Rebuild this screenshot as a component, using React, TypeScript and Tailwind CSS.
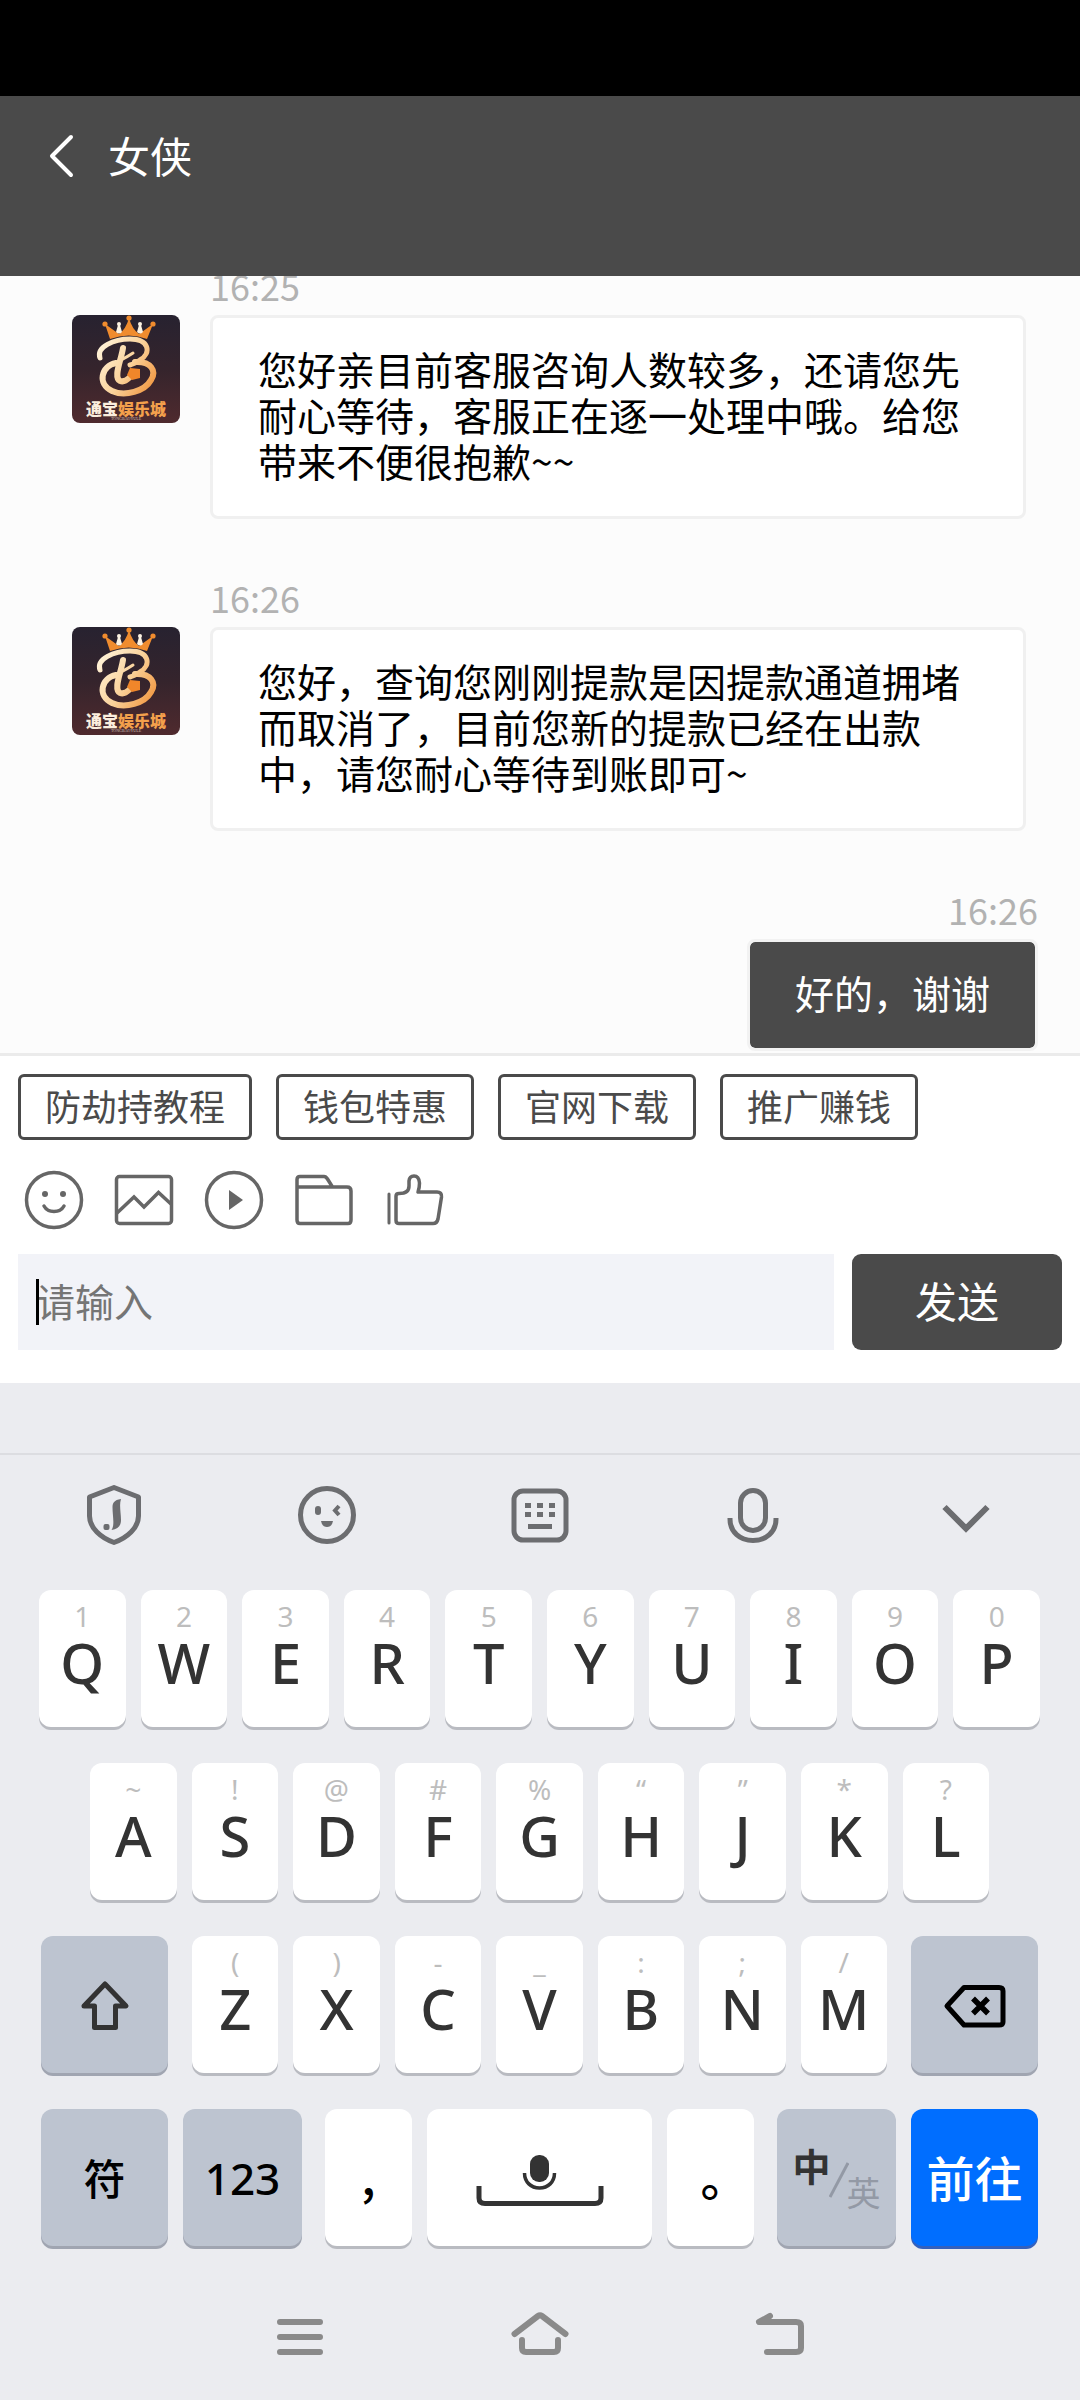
import { useState } from "react";
import type { ReactNode } from "react";

function Svg({ w, h, label, children }: { w: number; h: number; label?: string; children: ReactNode }) {
  return (
    <svg
      width={w}
      height={h}
      viewBox={`0 0 ${w} ${h}`}
      fill="none"
      stroke="currentColor"
      className="shrink-0"
      role={label ? "img" : undefined}
      aria-label={label}
      aria-hidden={label ? undefined : true}
    >
      {children}
    </svg>
  );
}

function Avatar() {
  return (
    <div className="relative h-[108px] w-[108px] shrink-0 overflow-hidden rounded-lg bg-linear-to-b from-[#272230] via-[#35242c] to-[#4f2a2e]">
      <Svg w={108} h={108} label="通宝娱乐城">
        <defs>
          <linearGradient id="gold" gradientUnits="userSpaceOnUse" x1="26" y1="30" x2="84" y2="66">
            <stop offset="0" stopColor="#fff3da" />
            <stop offset="0.55" stopColor="#fad29a" />
            <stop offset="1" stopColor="#f29a45" />
          </linearGradient>
        </defs>
        <g stroke="none" fill="#f08c2e">
          <path d="M38 24 L33 9 L47 19 Q54 14 57 3 Q60 14 67 19 L81 9 L75 24 Q57 17 38 24Z" />
          <circle cx="33" cy="9" r="2.6" />
          <circle cx="57" cy="3" r="2.6" />
          <circle cx="81" cy="9" r="2.6" />
        </g>
        <g stroke="none" fill="#fdf3e2">
          <circle cx="47" cy="9" r="2" />
          <path d="M46 10h2l2 7q-3 3-6 0Z" />
          <circle cx="68" cy="9" r="2" />
          <path d="M67 10h2l2 7q-3 3-6 0Z" />
        </g>
        <g stroke="url(#gold)" strokeLinecap="round" strokeLinejoin="round">
          <path d="M28 43 C24 32 42 24 58 24 C77 24 80 38 68 45 C65 47 62 49 58 50" strokeWidth="5" />
          <path d="M63 47 C79 46 85 56 79 65 C73 76 53 82 40 76 C25 69 29 51 44 48" strokeWidth="6" />
          <path d="M51 33 C49 46 41 62 48 66 C51 67 54 66 57 63" strokeWidth="6" />
          <path d="M37 50 Q49 46 61 38" strokeWidth="3" />
        </g>
        <path d="M58 53 L68 54 V63 L60 65 L55 60Z" fill="#f0862a" stroke="none" />
      </Svg>
      <div className="absolute inset-x-0 top-[84px] text-center text-[16px] leading-[18px] font-black text-[#f3a04c]">
        <span className="text-[#fbeedd]">通宝</span>娱乐城
      </div>
      <div className="absolute inset-x-0 top-[101px] text-center font-['Liberation_Serif',serif] text-[4px] leading-[5px] text-[#d8c4bd]">
        TONGBAOYULE
      </div>
    </div>
  );
}

function Received({ time, text }: { time: string; text: string }) {
  return (
    <article className="mb-[57px] flex shrink-0 pr-[54px] pl-[72px]">
      <div className="pt-[51px]">
        <Avatar />
      </div>
      <div className="ml-[30px] min-w-0 flex-1">
        <time className="mb-[9px] block text-[36px] leading-[42px] text-[#b2b2b2]">{time}</time>
        <p className="rounded-lg border-[3px] border-[#f0f0f0] bg-white px-[45px] pt-[27px] pb-[33px] text-[39px] leading-[46px] text-black">
          {text}
        </p>
      </div>
    </article>
  );
}

function Sent({ time, text }: { time: string; text: string }) {
  return (
    <article className="flex shrink-0 flex-col items-end pr-[42px] pb-[2px]">
      <time className="mb-[9px] block text-[36px] leading-[42px] text-[#b2b2b2]">{time}</time>
      <p className="rounded-lg border-[3px] border-[#f2f2f2] bg-[#4a4a4a] bg-clip-padding px-[45px] pt-[27px] pb-[33px] text-[39px] leading-[46px] text-white">
        {text}
      </p>
    </article>
  );
}

const quickLinks = ["防劫持教程", "钱包特惠", "官网下载", "推广赚钱"];

const attachments: { label: string; icon: ReactNode }[] = [
  {
    label: "表情",
    icon: (
      <Svg w={60} h={60}>
        <circle cx="30" cy="30" r="27.5" strokeWidth="3.500" />
        <g fill="currentColor" stroke="none">
          <circle cx="21" cy="24" r="3" />
          <circle cx="39" cy="24" r="3" />
        </g>
        <path d="M20 36 Q23 41.500 30 41.500 T40 36" strokeWidth="3.500" strokeLinecap="round" />
      </Svg>
    ),
  },
  {
    label: "图片",
    icon: (
      <Svg w={60} h={60}>
        <rect x="2.500" y="6.500" width="55" height="47" rx="3" strokeWidth="3.500" />
        <path d="M3 43 L20 27 L30 37 L44.500 22.500 L57 34" strokeWidth="3.500" />
      </Svg>
    ),
  },
  {
    label: "视频",
    icon: (
      <Svg w={60} h={60}>
        <circle cx="30" cy="30" r="27.5" strokeWidth="3.500" />
        <path d="M25 20 L39 30 L25 40Z" fill="currentColor" stroke="none" />
      </Svg>
    ),
  },
  {
    label: "文件",
    icon: (
      <Svg w={60} h={60}>
        <path
          d="M3 17 V9.500 Q3 6.500 6 6.500 H30 Q32 6.500 33.500 9 L38.500 17 H53 Q57 17 57 21 V50 Q57 53.500 54 53.500 H6 Q3 53.500 3 50Z M3 17 H38.500"
          strokeWidth="3.500"
          strokeLinejoin="round"
        />
      </Svg>
    ),
  },
  {
    label: "赞",
    icon: (
      <Svg w={60} h={60}>
        <g strokeWidth="3.500" strokeLinecap="round" strokeLinejoin="round">
          <path d="M5 24 V53" strokeWidth="3" />
          <path d="M12 26 Q12 23.500 15 23.500 C22 23.500 25 21 25 16 V11 Q25.500 6 30 6 Q35 6 35.500 13 Q35.500 18 34 22 H53 Q58 22 57.500 27 L54 49 Q53 53.500 49 53.500 H15 Q12 53.500 12 50.500Z" />
        </g>
      </Svg>
    ),
  },
];

const toolbar: { label: string; icon: ReactNode }[] = [
  {
    label: "输入法设置",
    icon: (
      <Svg w={60} h={60}>
        <path d="M30 2.500 L54.500 12 V31 C54.500 43 43 53 30 57.500 C17 53 5.500 43 5.500 31 V12Z" strokeWidth="5" strokeLinejoin="round" />
        <path d="M37 14 C30 15 28.500 18 28.500 22 C28.500 31 31 40 27.500 45 C34 44 37 41 37 35 C37 28 35 20 37 14Z" fill="currentColor" stroke="none" />
        <rect x="19.500" y="39" width="6" height="6" rx="2" fill="currentColor" stroke="none" />
      </Svg>
    ),
  },
  {
    label: "表情符号",
    icon: (
      <Svg w={60} h={60}>
        <circle cx="30" cy="30" r="26.5" strokeWidth="5" />
        <rect x="18" y="21" width="6" height="9" rx="3" fill="currentColor" stroke="none" />
        <path d="M42 21 L38 25.500 L42 30" strokeWidth="4" />
        <path d="M24 36 H36 Q35 42 30 42 Q25 42 24 36Z" fill="currentColor" stroke="none" />
      </Svg>
    ),
  },
  {
    label: "键盘",
    icon: (
      <Svg w={60} h={60}>
        <rect x="4" y="6" width="52" height="49" rx="9" strokeWidth="5" />
        <path d="M15 20.500h6m6 0h6m6 0h6M15 29.500h6m6 0h6m6 0h6M18 41.500h24" strokeWidth="5" />
      </Svg>
    ),
  },
  {
    label: "语音",
    icon: (
      <Svg w={60} h={60}>
        <rect x="17.500" y="5.500" width="25" height="40" rx="12.500" strokeWidth="5" />
        <path d="M7 33 V34 C7 47 17 55.500 30 55.500 C43 55.500 53 47 53 34 V33" strokeWidth="5" />
      </Svg>
    ),
  },
  {
    label: "收起键盘",
    icon: (
      <Svg w={60} h={60}>
        <path d="M8.500 22 L30 43.500 L51.500 22" strokeWidth="6" />
      </Svg>
    ),
  },
];

const row1: [string, string][] = [
  ["1", "Q"], ["2", "W"], ["3", "E"], ["4", "R"], ["5", "T"],
  ["6", "Y"], ["7", "U"], ["8", "I"], ["9", "O"], ["0", "P"],
];
const row2: [string, string][] = [
  ["~", "A"], ["!", "S"], ["@", "D"], ["#", "F"], ["%", "G"],
  ["“", "H"], ["”", "J"], ["*", "K"], ["?", "L"],
];
const row3: [string, string][] = [
  ["(", "Z"], [")", "X"], ["-", "C"], ["_", "V"], [":", "B"], [";", "N"], ["/", "M"],
];

function LetterKey({ hint, letter }: { hint: string; letter: string }) {
  return (
    <button className="flex h-[137px] min-w-0 flex-1 flex-col items-center rounded-xl bg-white pt-3 font-['Noto_Sans',sans-serif] shadow-[0_3px_0_#b9bbc1]">
      <span className="text-[28px] leading-[28px] text-[#bdbdbd]">{hint}</span>
      <span className="text-[56px] leading-[64px] font-medium text-[#333333]">{letter}</span>
    </button>
  );
}

const plainKey =
  "flex h-[137px] shrink-0 items-center justify-center rounded-xl bg-white text-black shadow-[0_3px_0_#b9bbc1]";
const functionKey =
  "flex h-[137px] shrink-0 items-center justify-center rounded-xl bg-[#bdc4d0] text-black shadow-[0_3px_0_#a0a5b1]";

export default function App() {
  const [draft, setDraft] = useState("");

  return (
    <div className="flex h-screen flex-col overflow-hidden bg-[#fcfcfc] font-['Noto_Sans_CJK_SC',sans-serif]">
      <div className="h-24 shrink-0 bg-black" />
      <header className="flex h-[180px] shrink-0 items-start bg-[#4a4a4a] pt-[30px] pl-[42px] text-white">
        <button aria-label="返回" className="flex h-[60px] items-center">
          <Svg w={40} h={60}>
            <path d="M29 11 L10 30 L29 49" strokeWidth="4" strokeLinecap="round" strokeLinejoin="round" />
          </Svg>
        </button>
        <h1 className="ml-[26px] text-[42px] leading-[58px]">女侠</h1>
      </header>

      <main className="flex min-h-0 flex-1 flex-col justify-end overflow-hidden">
        <Received time="16:25" text="您好亲目前客服咨询人数较多，还请您先耐心等待，客服正在逐一处理中哦。给您带来不便很抱歉~~" />
        <Received time="16:26" text="您好，查询您刚刚提款是因提款通道拥堵而取消了，目前您新的提款已经在出款中，请您耐心等待到账即可~" />
        <Sent time="16:26" text="好的，谢谢" />
      </main>

      <section className="shrink-0 border-t-[3px] border-[#ebebeb] bg-white px-[18px] pt-[18px] pb-[33px]">
        <div className="flex gap-6">
          {quickLinks.map((name) => (
            <button key={name} className="h-[66px] rounded-md border-[3px] border-[#4a4a4a] px-6 pb-1 text-[36px] leading-[56px] text-[#4a4a4a]">
              {name}
            </button>
          ))}
        </div>
        <div className="mt-[30px] flex gap-[30px] px-1.5 text-[#666666]">
          {attachments.map((item) => (
            <button key={item.label} aria-label={item.label}>
              {item.icon}
            </button>
          ))}
        </div>
        <form className="mt-6 flex gap-[18px]" onSubmit={(e) => e.preventDefault()}>
          <div className="relative min-w-0 flex-1">
            <input
              aria-label="消息"
              placeholder="请输入"
              value={draft}
              onChange={(e) => setDraft(e.target.value)}
              className="h-24 w-full bg-[#f2f3f8] px-[18px] pb-1 text-[39px] text-black caret-transparent outline-none placeholder:text-[#757575]"
            />
            <span className="absolute top-[25px] left-[18px] h-[46px] w-[3px] bg-black" />
          </div>
          <button className="h-24 w-[210px] rounded-[9px] bg-[#4a4a4a] pb-1.5 text-[42px] text-white">发送</button>
        </form>
      </section>

      <section aria-label="键盘" className="shrink-0 bg-[#ebecf0]">
        <div className="h-[70px]" />
        <div className="flex justify-between border-t-2 border-[#dcdde1] px-[84px] pt-[30px] pb-[45px] text-[#6c6d70]">
          {toolbar.map((item) => (
            <button key={item.label} aria-label={item.label}>
              {item.icon}
            </button>
          ))}
        </div>
        <div className="flex flex-col gap-9">
          <div className="flex gap-[15px] pr-10 pl-[39px]">
            {row1.map(([hint, letter]) => (
              <LetterKey key={letter} hint={hint} letter={letter} />
            ))}
          </div>
          <div className="flex gap-[15px] pr-[91px] pl-[90px]">
            {row2.map(([hint, letter]) => (
              <LetterKey key={letter} hint={hint} letter={letter} />
            ))}
          </div>
          <div className="flex gap-6 pr-[42px] pl-[41px]">
            <button aria-label="大写" className={`${functionKey} w-[127px]`}>
              <span className="text-[#333333]">
                <Svg w={60} h={60}>
                  <path d="M30 9 L51 31 H40.500 V52.500 H19.500 V31 H9Z" strokeWidth="5" strokeLinejoin="round" />
                </Svg>
              </span>
            </button>
            <div className="flex min-w-0 flex-1 gap-[15px]">
              {row3.map(([hint, letter]) => (
                <LetterKey key={letter} hint={hint} letter={letter} />
              ))}
            </div>
            <button aria-label="删除" className={`${functionKey} w-[127px]`}>
              <Svg w={66} h={60}>
                <path d="M5 31 L22 12.500 H57 Q61 12.500 61 16 V47 Q61 50 57 50 H22Z" strokeWidth="5" strokeLinejoin="round" />
                <path d="M31 23.500 L46 38.500 M46 23.500 L31 38.500" strokeWidth="5.500" />
              </Svg>
            </button>
          </div>
          <div className="flex gap-[15px] pr-[42px] pl-[41px]">
            <button className={`${functionKey} w-[127px] pb-0.5 text-[42px] font-medium`}>符</button>
            <button className={`${functionKey} w-[119px] font-['Noto_Sans',sans-serif] text-[44px] font-medium`}>123</button>
            <div className="flex min-w-0 flex-1 gap-[15px] px-2">
              <button aria-label="逗号" className={`${plainKey} w-[87px] pb-2 text-[48px] font-medium`}>,</button>
              <button aria-label="空格" className="flex h-[137px] min-w-0 flex-1 items-center justify-center rounded-xl bg-white text-[#333333] shadow-[0_3px_0_#b9bbc1]">
                <Svg w={128} h={60}>
                  <rect x="54" y="7" width="19" height="27" rx="9" fill="currentColor" stroke="none" />
                  <path d="M48.500 25 C48.500 34 55 40 63.500 40 C72 40 78.500 34 78.500 25" strokeWidth="3.500" />
                  <path d="M3 38 V50 Q3 55.500 9 55.500 H119 Q125 55.500 125 50 V38" strokeWidth="5" />
                </Svg>
              </button>
              <button aria-label="句号" className={`${plainKey} w-[87px] pb-1.5 text-[48px] font-medium`}>
                <span className="pl-7">。</span>
              </button>
            </div>
            <button aria-label="中英切换" className={`${functionKey} w-[119px] pb-1`}>
              <span className="pb-[22px] text-[38px] leading-[44px] font-bold text-[#333333]">中</span>
              <span className="-mx-0.5 pt-2 text-[#9399a5]">
                <Svg w={20} h={36}>
                  <path d="M1 35 L19 1" strokeWidth="3" />
                </Svg>
              </span>
              <span className="pt-8 text-[34px] leading-[40px] text-[#9399a5]">英</span>
            </button>
            <button className="flex h-[137px] w-[127px] shrink-0 items-center justify-center rounded-xl bg-[#006eff] pb-1 text-[48px] font-medium text-white shadow-[0_3px_0_#3461bd]">
              前往
            </button>
          </div>
        </div>
        <nav className="flex h-[154px] items-center justify-center gap-[180px] pt-7 text-[#8a8a8a]">
          <button aria-label="最近任务">
            <Svg w={60} h={60}>
              <path d="M10 15H50M10 30H50M10 45H50" strokeWidth="6" strokeLinecap="round" />
            </Svg>
          </button>
          <button aria-label="主页">
            <Svg w={60} h={60}>
              <path d="M4.500 27 L28 9 Q30 7.500 32 9 L55.500 27 M12 33 V41 Q12 45 16 45 H44 Q48 45 48 41 V33" strokeWidth="6" strokeLinecap="round" strokeLinejoin="round" />
            </Svg>
          </button>
          <button aria-label="返回上一页">
            <Svg w={60} h={60}>
              <path d="M20 9 L9 15 H20Z" fill="currentColor" stroke="none" />
              <path d="M20 9 L9 15 H46 Q51 15 51 19 V41 Q51 45 46 45 H17" strokeWidth="6" strokeLinecap="round" strokeLinejoin="round" />
            </Svg>
          </button>
        </nav>
      </section>
    </div>
  );
}
